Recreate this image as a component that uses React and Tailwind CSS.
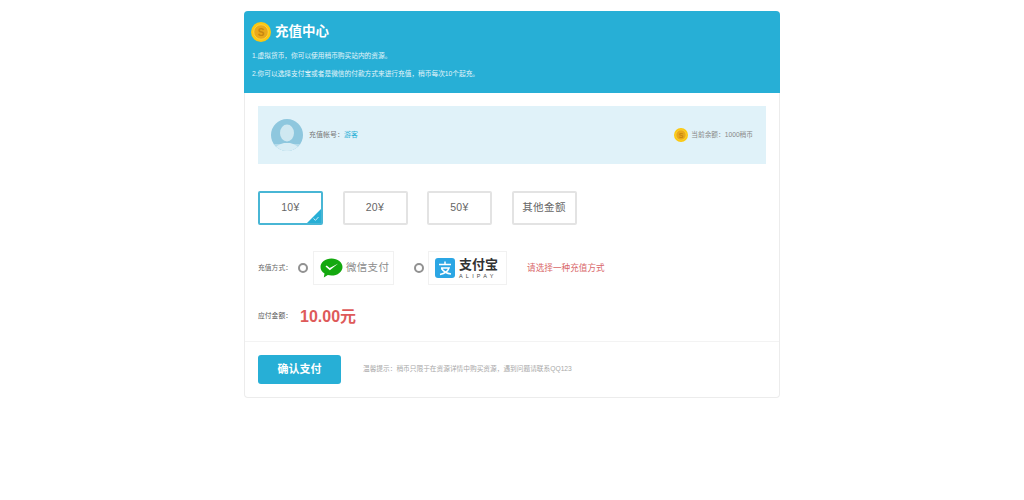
const font = { fontFamily: '"Liberation Sans", "Noto Sans CJK SC", sans-serif' };

function Coin({ size }) {
  return (
    <svg width={size} height={size} viewBox="0 0 40 40" className="shrink-0">
      <circle cx="20" cy="20" r="20" fill="#fbc80f" />
      <circle cx="20" cy="20" r="14.500" fill="#e9a91a" stroke="#fdd84f" strokeWidth="1.500" />
      <text x="20" y="27.500" textAnchor="middle" fontSize="20" fontWeight="700" fill="#c8860f" fontFamily="Liberation Sans, sans-serif">
        S
      </text>
    </svg>
  );
}

function Avatar() {
  return (
    <svg width="32" height="32" viewBox="0 0 32 32" className="shrink-0">
      <defs>
        <clipPath id="av">
          <circle cx="16" cy="16" r="16" />
        </clipPath>
      </defs>
      <g clipPath="url(#av)">
        <rect width="32" height="32" fill="#8ec7de" />
        <rect y="25" width="32" height="7" fill="#b4dbea" />
        <ellipse cx="16" cy="14" rx="7" ry="8.500" fill="#cfe8f1" />
        <path d="M3 32c1-5 6-7 10-8h6c4 1 9 3 10 8z" fill="#d8edf5" />
      </g>
    </svg>
  );
}

function AmountButton({ label, active }) {
  return (
    <div
      className={`relative flex h-[34px] w-[65px] items-center justify-center overflow-hidden rounded-[2px] border-2 text-[10.500px] tracking-[0.4px] text-[#666] ${
        active ? "border-[#48b6d5]" : "border-[#e3e3e3]"
      }`}
    >
      {label}
      {active && (
        <svg width="14" height="14" viewBox="0 0 14 14" className="absolute right-0 bottom-0">
          <path d="M14 0v14H0z" fill="#27afd6" />
          <path d="M6.500 9.500l2 1.800 3-3.300" fill="none" stroke="#d8f1f8" strokeWidth="0.900" />
        </svg>
      )}
    </div>
  );
}

function Radio({ className }) {
  return <span className={`block h-[10px] w-[10px] shrink-0 rounded-full border-[2px] border-[#919191] bg-white ${className}`} />;
}

export default function App() {
  const amounts = ["10¥", "20¥", "50¥", "其他金额"];
  return (
    <div className="flex min-h-[500px] justify-center bg-white pt-[11px]" style={font}>
      <div className="h-[387px] w-[536px] rounded-[4px] border border-[#ececec] border-t-0">
        <div className="-mx-px h-[82px] rounded-t-[4px] bg-[#27afd6] pt-[11px] pl-[7px] text-white">
          <div className="flex items-center gap-[4px]">
            <Coin size={20} />
            <h1 className="text-[13.500px] leading-[20px] font-bold">充值中心</h1>
          </div>
          <p className="mt-[9px] pl-[1px] text-[6.700px] leading-[10px] text-[#e4f5fa]">1.虚拟货币，你可以使用稍币购买站内的资源。</p>
          <p className="mt-[8px] pl-[1px] text-[6.700px] leading-[10px] text-[#e4f5fa]">2.你可以选择支付宝或者是微信的付款方式来进行充值，稍币每次10个起充。</p>
        </div>

        <div className="mx-[13px] mt-[13px] flex h-[58px] items-center justify-between bg-[#e0f2f9] px-[13px]">
          <div className="flex items-center gap-[6px]">
            <Avatar />
            <span className="text-[7px] text-[#777]">
              充值帐号：<span className="text-[#27afd6]">游客</span>
            </span>
          </div>
          <div className="flex items-center gap-[3px]">
            <Coin size={14} />
            <span className="text-[6.700px] text-[#888]">当前余额：1000稍币</span>
          </div>
        </div>

        <div className="mt-[27px] ml-[13px] flex gap-[19.500px]">
          {amounts.map((a, i) => (
            <AmountButton key={a} label={a} active={i === 0} />
          ))}
        </div>

        <div className="mt-[26px] ml-[13px] flex h-[34px] items-center">
          <span className="w-[40px] text-[6.800px] text-[#666]">充值方式：</span>
          <Radio />
          <div className="ml-[5px] flex h-[34px] w-[81px] items-center gap-[3px] border border-[#f1f1f1] pl-[6px]">
            <svg width="23" height="20" viewBox="0 0 23 20">
              <path d="M11.500 0.500C5.200 0.500 0.500 4.300 0.500 9c0 2.700 1.500 5 4 6.600L3.800 19.500l4-2.400c1.200.3 2.400.5 3.700.5 6.200 0 11-3.800 11-8.600S17.700 0.500 11.500 0.500z" fill="#14a80f" />
              <path d="M5.500 8.500l1.200-.9 3 2.300 8.500-4.300-8.400 6.600z" fill="#fff" />
            </svg>
            <span className="text-[10.500px] tracking-[0.300px] text-[#8c8c8c]">微信支付</span>
          </div>
          <Radio className="ml-[20px]" />
          <div className="ml-[4px] flex h-[34px] w-[79px] items-center gap-[4px] border border-[#f1f1f1] pl-[6px]">
            <svg width="20" height="20" viewBox="0 0 20 20" className="shrink-0">
              <rect width="20" height="20" rx="3" fill="#2ba6e4" />
              <path d="M4 6.500h12M10 3.500v3M6 10h8c-1 3-4 5.500-9 6.500M6.500 10.500c2 3 5 5 9.500 5.500" fill="none" stroke="#fff" strokeWidth="1.500" />
            </svg>
            <div className="flex flex-col items-start">
              <span className="text-[13px] leading-[15px] font-bold text-[#333]">支付宝</span>
              <span className="text-[5.500px] leading-[8px] tracking-[3.200px] text-[#444]">ALIPAY</span>
            </div>
          </div>
          <span className="ml-[20px] text-[8.650px] text-[#d9686a]">请选择一种充值方式</span>
        </div>

        <div className="mt-[18px] ml-[13px] flex h-[26px] items-center">
          <span className="w-[42px] text-[6.800px] text-[#555]">应付金额：</span>
          <span className="mt-[1px] text-[16px] font-bold text-[#de5a5a]">10.00元</span>
        </div>

        <div className="mt-[12px] flex h-[56px] items-center border-t border-[#f3f3f3] pl-[13px]">
          <button className="h-[29px] w-[83px] rounded-[3px] bg-[#27afd6] text-[11px] font-bold text-white">确认支付</button>
          <span className="ml-[22px] text-[6.700px] text-[#a8a8a8]">温馨提示：稍币只限于在资源详情中购买资源，遇到问题请联系QQ123</span>
        </div>
      </div>
    </div>
  );
}
